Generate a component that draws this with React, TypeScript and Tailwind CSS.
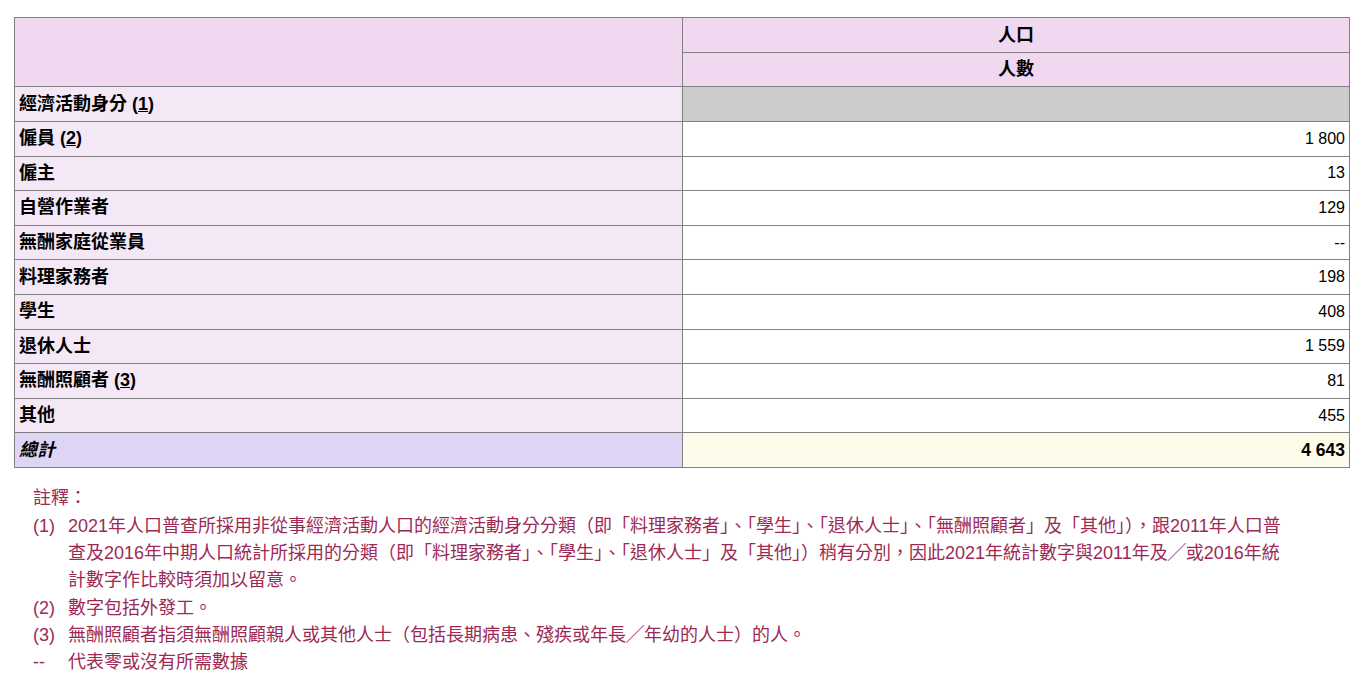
const font =
  "font-['Liberation_Sans','Noto_Sans_CJK_TC',Arial,sans-serif]";

interface Row {
  label: string;
  note?: string;
  value: string;
}

const rows: Row[] = [
  { label: "僱員", note: "2", value: "1 800" },
  { label: "僱主", value: "13" },
  { label: "自營作業者", value: "129" },
  { label: "無酬家庭從業員", value: "--" },
  { label: "料理家務者", value: "198" },
  { label: "學生", value: "408" },
  { label: "退休人士", value: "1 559" },
  { label: "無酬照顧者", note: "3", value: "81" },
  { label: "其他", value: "455" },
];

const notes = [
  {
    mark: "(1)",
    text: "2021年人口普查所採用非從事經濟活動人口的經濟活動身分分類（即「料理家務者」、「學生」、「退休人士」、「無酬照顧者」及「其他」），跟2011年人口普查及2016年中期人口統計所採用的分類（即「料理家務者」、「學生」、「退休人士」及「其他」）稍有分別，因此2021年統計數字與2011年及╱或2016年統計數字作比較時須加以留意。",
  },
  { mark: "(2)", text: "數字包括外發工。" },
  {
    mark: "(3)",
    text: "無酬照顧者指須無酬照顧親人或其他人士（包括長期病患、殘疾或年長╱年幼的人士）的人。",
  },
  { mark: "--", text: "代表零或沒有所需數據" },
];

function NoteRef({ n }: { n: string }) {
  return (
    <span>
      {" "}(<span className="underline">{n}</span>)
    </span>
  );
}

const cell = "border border-[#808080]";

export default function App() {
  return (
    <div className={`${font} bg-white min-h-screen pt-[17px] px-[14px] text-black`}>
      <table className="w-[1336px] border-collapse border border-[#808080] text-[18px]">
        <thead>
          <tr className="h-[35px]">
            <th rowSpan={2} className={`w-[668px] ${cell} bg-[#f0d8f1]`}></th>
            <th className={`${cell} bg-[#f0d8f1] font-bold`}>人口</th>
          </tr>
          <tr className="h-[34px]">
            <th className={`${cell} bg-[#f0d8f1] font-bold`}>人數</th>
          </tr>
        </thead>
        <tbody>
          <tr className="h-[35px]">
            <td className={`${cell} bg-[#f5e8f6] px-1 text-left font-bold`}>
              經濟活動身分<NoteRef n="1" />
            </td>
            <td className={`${cell} bg-[#cccccc]`}></td>
          </tr>
          {rows.map((r) => (
            <tr key={r.label} className="h-[34.6px]">
              <td className={`${cell} bg-[#f5e8f6] px-1 text-left font-bold`}>
                {r.label}
                {r.note && <NoteRef n={r.note} />}
              </td>
              <td className={`${cell} bg-white px-1 text-right text-base`}>
                {r.value}
              </td>
            </tr>
          ))}
          <tr className="h-[35px]">
            <td className={`${cell} bg-[#ddd5f3] px-1 text-left font-bold italic`}>
              總計
            </td>
            <td className={`${cell} bg-[#fefbea] px-1 text-right text-[17.5px] font-bold`}>
              4 643
            </td>
          </tr>
        </tbody>
      </table>

      <div className="mt-[17px] pl-[19px] text-[18px] leading-[27.3px] text-[#9c2a55]">
        <p>註釋：</p>
        <ul>
          {notes.map((n) => (
            <li key={n.mark} className="flex">
              <span className="w-[35px] shrink-0">{n.mark}</span>
              <span className="w-[1222px]">{n.text}</span>
            </li>
          ))}
        </ul>
      </div>
    </div>
  );
}
